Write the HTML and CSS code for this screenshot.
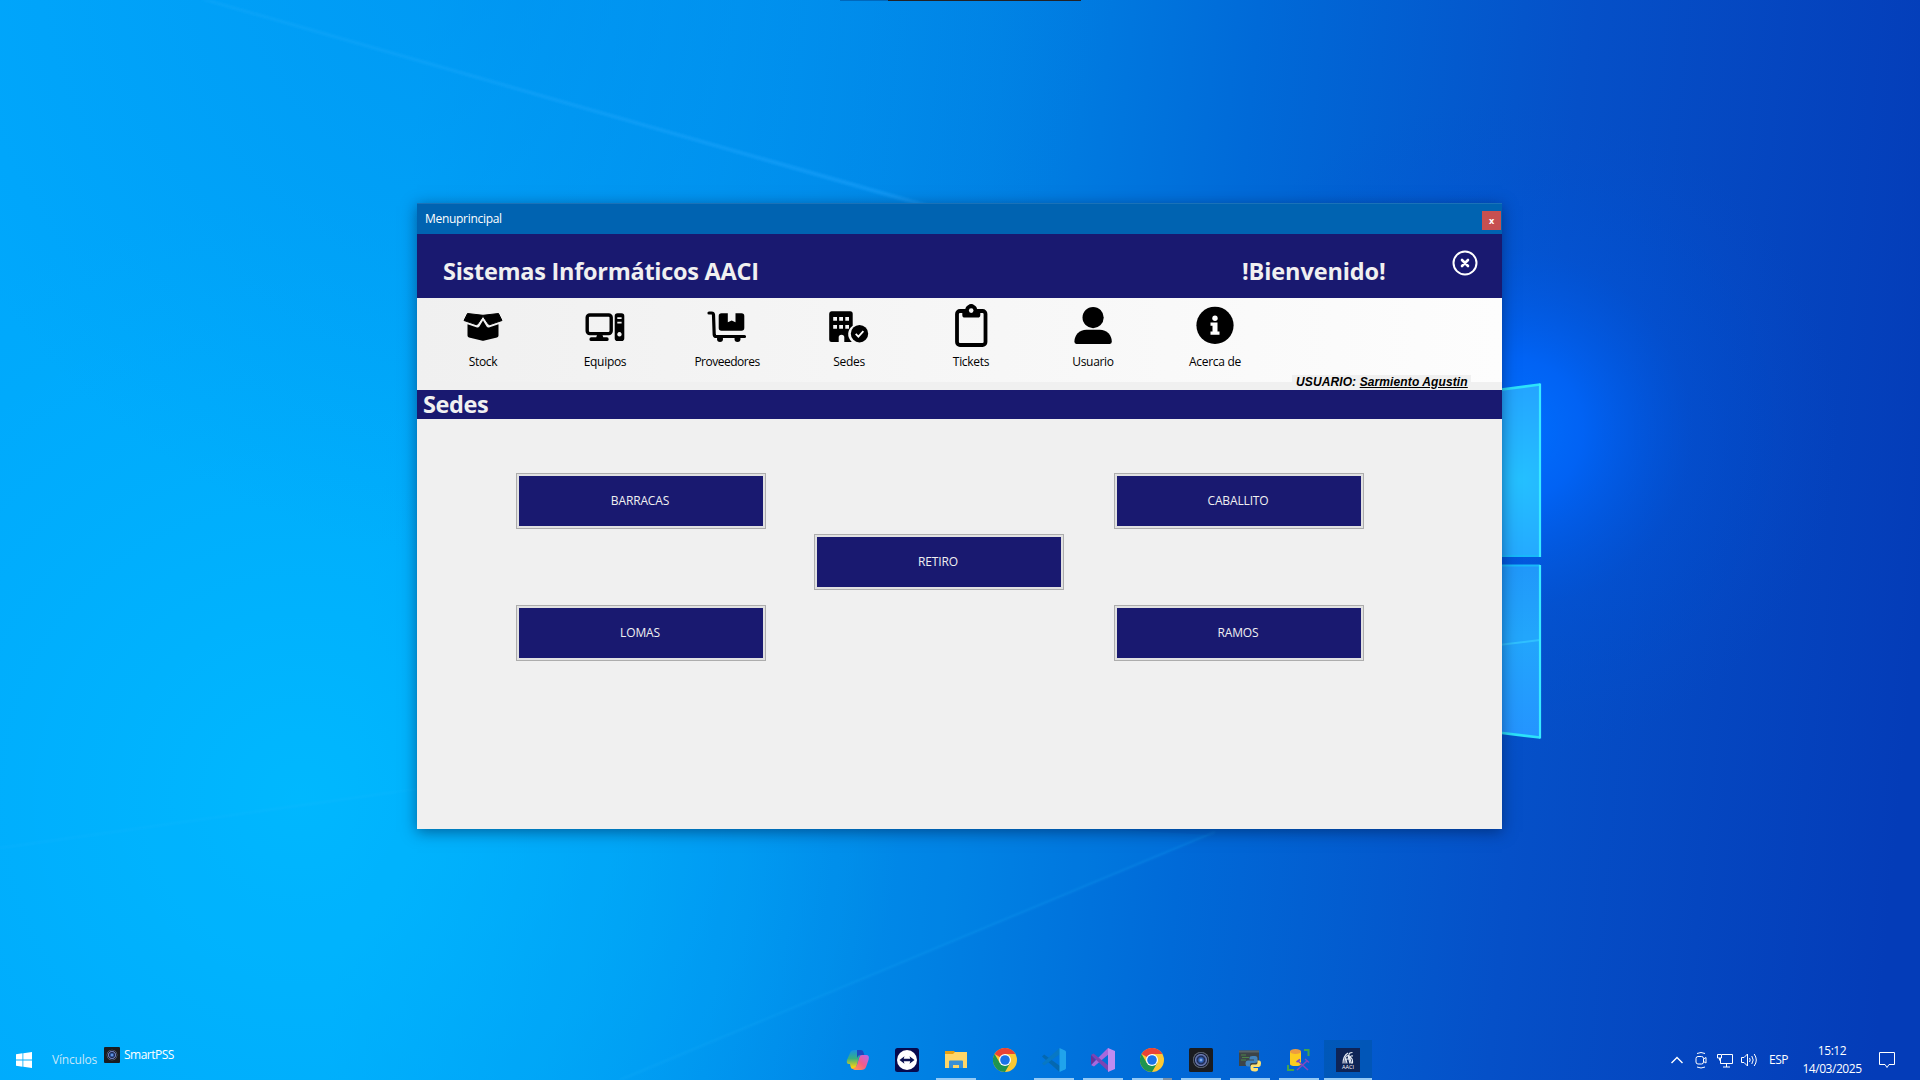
FILE: index.html
```
<!DOCTYPE html>
<html lang="es">
<head>
<meta charset="utf-8">
<title>Menuprincipal</title>
<link rel="stylesheet" href="styles.css">
</head>
<body>
<div class="desktop">
  <svg class="wallpaper" viewBox="0 0 1920 1080" aria-hidden="true">
    <defs>
      <linearGradient id="sky" gradientUnits="userSpaceOnUse" x1="0" y1="420" x2="1920" y2="600">
        <stop offset="0" stop-color="#00a8fc"/><stop offset=".2" stop-color="#00a8fa"/>
        <stop offset=".36" stop-color="#0096f0"/><stop offset=".5" stop-color="#0082e4"/>
        <stop offset=".63" stop-color="#006ad8"/><stop offset=".8" stop-color="#0550c8"/>
        <stop offset="1" stop-color="#043cb8"/>
      </linearGradient>
      <radialGradient id="cyan" gradientUnits="userSpaceOnUse" cx="300" cy="800" r="600">
        <stop offset="0" stop-color="#00baff" stop-opacity=".9"/><stop offset="1" stop-color="#00b4ff" stop-opacity="0"/>
      </radialGradient>
      <radialGradient id="shade" gradientUnits="userSpaceOnUse" cx="500" cy="-60" r="620">
        <stop offset="0" stop-color="#0088ec" stop-opacity=".5"/><stop offset="1" stop-color="#0088ec" stop-opacity="0"/>
      </radialGradient>
      <radialGradient id="glow" gradientUnits="userSpaceOnUse" cx="1510" cy="430" r="330">
        <stop offset="0" stop-color="#0070ff"/><stop offset=".22" stop-color="#0066fc" stop-opacity=".85"/>
        <stop offset=".55" stop-color="#0058e4" stop-opacity=".28"/><stop offset="1" stop-color="#0050d0" stop-opacity="0"/>
      </radialGradient>
      <linearGradient id="beam" x1="0" y1="0" x2="1" y2="0">
        <stop offset="0" stop-color="#2ab4ff" stop-opacity=".3"/><stop offset="1" stop-color="#22a4ff" stop-opacity=".8"/>
      </linearGradient>
      <radialGradient id="paneA" gradientUnits="userSpaceOnUse" cx="1520" cy="480" r="110">
        <stop offset="0" stop-color="#24c0ff"/><stop offset="1" stop-color="#24a0ff"/>
      </radialGradient>
      <linearGradient id="paneB" x1="0" y1="0" x2="0" y2="1">
        <stop offset="0" stop-color="#2098fa"/><stop offset=".42" stop-color="#22a6fc"/><stop offset="1" stop-color="#2494ff"/>
      </linearGradient>
      <filter id="soft" x="-20%" y="-20%" width="140%" height="140%"><feGaussianBlur stdDeviation="1.1"/></filter>
    </defs>
    <rect width="1920" height="1080" fill="url(#sky)"/>
    <rect width="1920" height="1080" fill="url(#cyan)"/>
    <rect width="1920" height="1080" fill="url(#shade)"/>
    <rect width="1920" height="1080" fill="url(#glow)"/>
    <path d="M0 848 417 790 1210 835 620 1080H0z" fill="#00b4ff" opacity=".08"/>
    <path d="M200 0H212L935 206H920z" fill="url(#beam)" opacity=".6" filter="url(#soft)"/>
    <path d="M0 848 417 789M1215 832 620 1080" stroke="#2cbcff" stroke-width="2" opacity=".16" fill="none" filter="url(#soft)"/>
    <path d="M1490 391.200 1540 384.500V556H1490z" fill="url(#paneA)"/>
    <path d="M1490 565.500H1540V737L1490 731z" fill="url(#paneB)"/>
    <path d="M1490 646 1540 640" stroke="#30c0ff" stroke-width="2"/>
    <path d="M1490 391 1540 384.500M1490 731.500 1540 737.500" stroke="#2ce2fa" stroke-width="2.600"/>
    <path d="M1490 556H1540M1490 565.500H1540" stroke="#18b8fa" stroke-width="2"/>
    <path d="M1540 383.500V557M1540 565V738.500" stroke="#38eaff" stroke-width="2.200"/>
    <path d="M840 .5H888" stroke="#0068bc"/><path d="M888 .5H1081" stroke="#222226"/>
  </svg>

  <main class="window">
    <div class="titlebar"><span class="caption">Menuprincipal</span><button class="close-red">x</button></div>
    <header class="header">
      <h1 class="brand">Sistemas Informáticos AACI</h1>
      <span class="welcome">!Bienvenido!</span>
      <svg class="exit" viewBox="0 0 26 26"><circle cx="13" cy="13" r="11.500"/><path d="m10 10 6 6m0-6-6 6" stroke-width="2.600"/></svg>
    </header>
    <nav class="toolbar">
      <a class="tool"><svg class="tool-icon" viewBox="0 0 40 44">
        <path d="M4.500 10.500 20 12.300 35.500 10.500 39 17.500 27 21.600Q26 22 25.300 21L20 13.200 14.700 21Q14 22 13 21.600L1 17.500z" stroke="#000" stroke-width="1" stroke-linejoin="round"/>
        <path d="M4.500 21.300 14 24.400Q15.500 24.800 16.400 23.400L20 17.400 23.600 23.400Q24.500 24.800 26 24.400L35.500 21.300V32.500Q35.500 34 34 34.500L21.500 37.600Q20 38 18.500 37.600L6 34.500Q4.500 34 4.500 32.500z"/></svg><span>Stock</span></a>
      <a class="tool"><svg class="tool-icon" viewBox="0 0 40 44">
        <rect x="2.200" y="12" width="24" height="18.600" rx="2.500" fill="none" stroke="#000" stroke-width="3.400"/>
        <path d="M12 32h5.500l1 3H11zM6.300 34.300h15.500a1.900 1.900 0 0 1 0 3.800H6.300a1.900 1.900 0 0 1 0-3.800z"/>
        <path fill-rule="evenodd" d="M32.500 10.300H36.500a2.800 2.800 0 0 1 2.800 2.800V35.300a2.800 2.800 0 0 1-2.800 2.800H32.500a2.800 2.800 0 0 1-2.800-2.800V13.100a2.800 2.800 0 0 1 2.800-2.800zM32.300 14.200v1.700h4.300v-1.700zM32.300 18.800v1.700h4.300v-1.700zM34.450 29.100a2.200 2.200 0 1 0 .01 0z"/></svg><span>Equipos</span></a>
      <a class="tool"><svg class="tool-icon" viewBox="0 0 40 44">
        <path d="M2 10H4.700Q6.300 10 6.500 11.700L7.200 31.500Q7.400 33.500 9.200 33.500H37.500" fill="none" stroke="#000" stroke-width="3.200" stroke-linecap="round"/>
        <path d="M14.500 10.300H20.800V19.300L24.700 17.400 28.500 19.300V10.300H34.500Q37.300 10.300 37.300 13V25Q37.300 27.800 34.500 27.800H14.500Q11.700 27.800 11.700 25V13Q11.700 10.300 14.500 10.300z"/>
        <circle cx="13" cy="36" r="3"/><circle cx="30.500" cy="36" r="3"/></svg><span class="long">Proveedores</span></a>
      <a class="tool"><svg class="tool-icon" viewBox="0 0 40 44">
        <path fill-rule="evenodd" d="M2.500 8.200H21.200Q23.700 8.200 23.700 10.700V22.700A10 10 0 0 0 22.500 38.500V39H15.300V34.300Q15.300 31.700 12.500 31.700T9.700 34.300V39H2.500Q.2 39 .2 36.700V10.700Q.2 8.200 2.500 8.200zM4.200 14V17.700H8V14zM10.200 14V17.700H14V14zM16.300 14V17.700H20V14zM4.200 22V25.700H8V22zM10.200 22V25.700H14V22zM16.300 22V25.700H20V22z"/>
        <circle cx="30.500" cy="30.700" r="8.700"/><path d="m26.700 30.900 2.700 2.700 5-5.400" fill="none" stroke="#fff" stroke-width="1.800"/></svg><span>Sedes</span></a>
      <a class="tool"><svg class="tool-icon" viewBox="0 0 40 44">
        <rect x="6" y="8" width="28.500" height="34" rx="3" fill="none" stroke="#000" stroke-width="3.800"/>
        <path fill-rule="evenodd" d="M11.300 6.200H14.200A6.200 6.200 0 0 1 26.200 6.200H29.300V12Q29.300 14.600 26.700 14.600H13.900Q11.300 14.600 11.300 12zM20.200 5.200a2.400 2.400 0 1 0 .01 0z"/><circle cx="20.200" cy="4" r="3"/><circle cx="20.200" cy="7.600" r="2.300" fill="#f7f7f7"/></svg><span>Tickets</span></a>
      <a class="tool"><svg class="tool-icon" viewBox="0 0 40 44">
        <circle cx="20.100" cy="14.600" r="10.600"/><path d="M13.500 26.800H26.700C34 26.800 38.800 32.300 38.800 38.800Q38.800 40.900 36.800 40.900H3.400Q1.400 40.900 1.400 38.800C1.400 32.300 6.200 26.800 13.500 26.800z"/></svg><span>Usuario</span></a>
      <a class="tool"><svg class="tool-icon" viewBox="0 0 40 44">
        <circle cx="20" cy="22.300" r="18.600"/><circle cx="20" cy="15.300" r="2.700" fill="#fff"/><path d="M15.500 19.500H22.500V28.500H24.500V31.700H15.500V28.500H17.500V22.700H15.500z" fill="#fff"/></svg><span>Acerca de</span></a>
    </nav>
    <div class="session">USUARIO: <u>Sarmiento Agustin</u></div>
    <h2 class="section-title">Sedes</h2>
    <section class="sites">
      <button class="site barracas">BARRACAS</button>
      <button class="site caballito">CABALLITO</button>
      <button class="site retiro">RETIRO</button>
      <button class="site lomas">LOMAS</button>
      <button class="site ramos">RAMOS</button>
    </section>
  </main>

  <footer class="taskbar">
    <div class="start-area">
      <svg class="start" viewBox="0 0 16 16"><path fill="#fff" d="M0 2.200 6.500 1.300V7.500H0zM7.300 1.200 16 0V7.500H7.300zM0 8.400H6.500V14.700L0 13.800zM7.300 8.400H16V16L7.300 14.800z"/></svg>
      <span class="links">Vínculos</span>
      <span class="smart"><svg class="mini" viewBox="0 0 24 24"><use href="#lens"/></svg><span class="smart-name">SmartPSS</span></span>
    </div>
    <div class="apps">
      <div class="app"><svg viewBox="0 0 24 24">
        <defs>
          <linearGradient id="cpA" x1="0" y1="0" x2="0" y2="1"><stop offset="0" stop-color="#1890e4"/><stop offset=".45" stop-color="#38b080"/><stop offset=".9" stop-color="#f8d010"/></linearGradient>
          <linearGradient id="cpB" x1="1" y1="0" x2="0" y2="1"><stop offset="0" stop-color="#b868f0"/><stop offset=".5" stop-color="#f45c88"/><stop offset="1" stop-color="#ffa048"/></linearGradient>
          <radialGradient id="lensG"><stop offset="0" stop-color="#c0d8f8"/><stop offset=".2" stop-color="#3a72cc"/><stop offset=".48" stop-color="#1c2850"/><stop offset=".68" stop-color="#7484c0"/><stop offset=".82" stop-color="#141c30"/><stop offset="1" stop-color="#7c8494"/></radialGradient>
          <g id="lens"><rect width="24" height="24" rx="1.500" fill="#1a1c20"/><circle cx="12" cy="12" r="8" fill="url(#lensG)"/></g>
          <g id="chrome"><circle cx="12" cy="12" r="12" fill="#fcc934"/><path d="M12 12 1.600 6A12 12 0 0 1 22.400 6H12z" fill="#ea4335"/><path d="M1.600 6A12 12 0 0 0 12 24L17.200 15 12 12 6.800 15z" fill="#1e9450"/><circle cx="12" cy="12" r="6" fill="#fff"/><circle cx="12" cy="12" r="4.800" fill="#1a73e8"/></g>
        </defs>
        <path d="M8.500 2H15Q17 2 17.500 4L18 6H14L10.500 18Q10 21 7 21 5 21 4.500 18.500L4 16H3Q0 16 1 12L4 5Q5 2 8.500 2z" fill="url(#cpA)"/><path d="M11 2H15Q17 2 17.500 4L18.300 7H14Q12 7 11 10z" fill="#1c48c0"/><path d="M16 7H20Q24 7 22.500 12L20 19Q19 22 15 22H9Q7 22 6.500 20H8Q10 20 11 17L13.500 9Q14 7 16 7z" fill="url(#cpB)"/></svg></div>
      <div class="app"><svg viewBox="0 0 24 24"><rect width="24" height="24" rx="2.500" fill="#060a4e"/><circle cx="12" cy="12" r="10" fill="#fff"/><path d="m4.500 12 5-3.800-.8 2.600h6.600l-.8-2.600 5 3.800-5 3.800.8-2.600H8.700l.8 2.600z" fill="#0a1050"/></svg></div>
      <div class="app open"><svg viewBox="0 0 24 24"><path d="M1 3H10L12 5V8H1z" fill="#e8a010"/><path d="M1 6H9L11 4H23V20H1z" fill="#ffd668"/><path d="M5 20V13.500Q5 12.500 6 12.500H18Q19 12.500 19 13.500V20H15V17H9V20z" fill="#3890d8"/></svg></div>
      <div class="app"><svg viewBox="0 0 24 24"><use href="#chrome"/></svg></div>
      <div class="app open"><svg viewBox="0 0 24 24"><path d="M17.500 24 0 8.500 2.200 6.500 18 18z" fill="#0468b0"/><path d="M17.500 0 0 15.500 2.200 17.500 18 6z" fill="#0878c4"/><path d="M17.500 0 23 2.500Q24 3 24 4V20Q24 21 23 21.500L17.500 24z" fill="#20a4ec"/></svg></div>
      <div class="app open"><svg viewBox="0 0 24 24"><path d="M0 17 17 0 18 6 3 18.500z" fill="#a868dc"/><path d="M0 7 2.500 5.500 18 18V24z" fill="#7c44b4"/><path d="M0 7V17L4.500 12z" fill="#6c3098"/><path d="M17 0 24 3V21L17 24z" fill="#c08cf0"/></svg></div>
      <div class="app open multi"><svg viewBox="0 0 24 24"><use href="#chrome"/></svg></div>
      <div class="app open"><svg viewBox="0 0 24 24"><use href="#lens"/></svg></div>
      <div class="app open"><svg viewBox="0 0 24 24"><path d="M1 2.500H21V18H1z" fill="#3c4448"/><path d="M1 2.500H21V4.500H1z" fill="#586468"/><path d="M3 7h5M4 9.500h7M3 12h5" stroke="#4c8448" stroke-width="1.200"/><path d="M14.500 8H17Q19.500 8 19.500 10.500V13Q19.500 15 17 15H13.500Q12 15 12 17V18.500H10Q7.500 18.500 7.500 15.500T10 12.500H16V11.500H11.500V10Q11.500 8 14.500 8z" fill="#4484bc"/><path d="M19.500 12.500H21Q23 12.500 23 15.500T21 19H15.500V20H20V21.500Q20 23.500 16.500 23.500T12.500 21V18.500Q12.500 16.500 14.500 16.500H18Q19.500 16.500 19.500 14.500z" fill="#ffe070"/></svg></div>
      <div class="app open"><svg viewBox="0 0 24 24"><path d="M3 3V16Q3 18 8.500 18T14 16V3z" fill="#fccc20"/><ellipse cx="8.500" cy="3.500" rx="5.500" ry="2.500" fill="#ec9c40"/><path d="M17 2H21.500V8M1 17V22H7" fill="none" stroke="#40a450" stroke-width="2"/><path d="m10 22 10-9M11 13l10 9M9.500 14 13 11.500M18 11l4 3.500" stroke="#8048c0" stroke-width="1.600"/></svg></div>
      <div class="app open active"><svg viewBox="0 0 24 24"><rect width="24" height="24" fill="#0e2456"/><path d="M7 15.500Q7 8 12 5M9 15.500Q8.500 8 12 7.500L14 15.500M11 15.500 10 11h3M16.500 4.500Q12.500 4.500 13 7.500L15.500 15.500M17 8Q14 7.500 14.500 9.500 17 10.500 16.500 15.500" fill="none" stroke="#e8edf6" stroke-width="1.100"/><text x="12" y="20.500" text-anchor="middle" class="aaci">AACI</text></svg></div>
    </div>
    <div class="tray">
      <svg class="tray-icon" viewBox="0 0 18 18"><path d="m3.500 12 5.500-5.500 5.500 5.500" stroke-width="1.400"/></svg>
      <svg class="tray-icon" viewBox="0 0 18 18"><rect x="4" y="5.500" width="7.500" height="7.500" rx="2"/><path d="m11.500 8 2.500-1.500v5.500l-2.500-1.500M5 2.500q4-2 8 0M5 16q4 2 8 0"/></svg>
      <svg class="tray-icon" viewBox="0 0 18 18"><path d="M6 3.500H16.500V12.500H4.500V7M10.500 12.500V16M7 16h7M1.500 3.500h4V7h-4zM3.500 7V9.500"/></svg>
      <svg class="tray-icon" viewBox="0 0 18 18"><path d="M1.500 6.500H4L7.500 3V15L4 11.500H1.500zM9.500 7q1.400 2 0 4M11.800 5q2.800 4 0 8M14.200 3q4.200 6 0 12"/></svg>
      <span class="lang">ESP</span>
      <span class="clock"><span>15:12</span><span class="date">14/03/2025</span></span>
      <svg class="tray-icon notice" viewBox="0 0 18 18"><path d="M1.500 1.500H16.500V13.500H11L9 16.500 7 13.500H1.500z"/></svg>
    </div>
  </footer>
</div>
</body>
</html>
```
FILE: styles.css
```
* { box-sizing: border-box; }
body { margin: 0; font-family: "Open Sans", "Noto Sans", sans-serif; font-size: 12px; }
button { font: inherit; padding: 0; border: 0; }
h1, h2 { margin: 0; }

.desktop { position: relative; width: 1920px; height: 1080px; overflow: hidden; display: flex; flex-direction: column; justify-content: flex-end; }
.wallpaper { position: absolute; inset: 0; width: 1920px; height: 1080px; }

.window { position: absolute; left: 417px; top: 203px; width: 1085px; height: 626px; display: flex; flex-direction: column; background: #f0f0f0; box-shadow: 0 3px 14px rgba(0, 20, 60, .5); }
.titlebar { height: 31px; flex: none; display: flex; justify-content: space-between; padding: 0 1px 0 8px; background: #0063b1; border-top: 1px solid #1a72b8; color: #fff; }
.caption { line-height: 30px; letter-spacing: -.3px; }
.close-red { width: 19px; height: 19px; margin-top: 7px; background: #c75050; color: #fff; font: bold 9px/18px "Open Sans", sans-serif; }
.header { height: 64px; flex: none; display: flex; background: #191970; color: #f0f0f0; padding-left: 26px; }
.brand, .welcome, .section-title { font-size: 23.500px; font-weight: 700; white-space: nowrap; }
.brand { width: 799px; line-height: 75px; letter-spacing: -.27px; }
.welcome { width: 210px; line-height: 75px; letter-spacing: -.12px; }
.exit { width: 26px; height: 26px; margin-top: 16px; fill: none; stroke: #fff; stroke-width: 2; stroke-linecap: round; }

.toolbar { height: 84px; flex: none; display: flex; padding-left: 5px; background: linear-gradient(90deg, #f0f0f0, #fdfdfd); color: #000; }
.tool { width: 122px; display: flex; flex-direction: column; align-items: center; padding-top: 5px; line-height: 16px; letter-spacing: -.3px; }
.tool-icon { width: 40px; height: 44px; margin-bottom: 7px; }
.long { letter-spacing: -.5px; }
.session { position: absolute; left: 875px; top: 172px; width: 179px; height: 15px; padding-left: 4px; overflow: hidden; background: #f0f0f0; color: #000; font: italic bold 12px/14px "Liberation Sans", Arial, sans-serif; letter-spacing: .11px; white-space: nowrap; }
.section-title { height: 29px; flex: none; margin-top: 8px; padding-left: 6px; line-height: 29px; background: #191970; color: #f0f0f0; letter-spacing: -.4px; }

.sites { display: grid; grid-template-columns: 250px 250px 250px; grid-template-rows: 56px 56px 56px; column-gap: 49px; padding: 54px 0 0 99px; }
.site { border: 1px solid #adadad; box-shadow: inset 0 0 0 2px #e1e1e1; background: #191970; color: #f0f0f0; letter-spacing: -.15px; padding: 0 2px 2px 0; }
.barracas { grid-area: 1 / 1; }
.caballito { grid-area: 1 / 3; }
.retiro { grid-area: 2 / 2; margin: 5px 1px -5px -1px; }
.lomas { grid-area: 3 / 1; margin: 20px 0 -20px; }
.ramos { grid-area: 3 / 3; margin: 20px 0 -20px; }

.taskbar { position: relative; height: 40px; display: flex; color: #fff; }
.start-area { width: 834px; display: flex; padding-left: 16px; }
.start { width: 16px; height: 16px; margin-top: 12px; }
.links { margin-left: 20px; width: 52px; line-height: 40px; color: #c4e6fa; letter-spacing: -.2px; }
.smart { display: flex; gap: 4px; height: 30px; align-items: center; letter-spacing: -.5px; }
.smart-name { padding-bottom: 2px; }
.mini { width: 16px; height: 16px; }
.apps { width: 816px; display: flex; gap: 1px; }
.app { position: relative; width: 48px; height: 40px; display: flex; align-items: center; justify-content: center; }
.app svg { width: 24px; height: 24px; }
.app.open::after { content: ""; position: absolute; left: 4px; right: 4px; bottom: 0; height: 2px; background: #95caf5; }
.app.multi::after { background: linear-gradient(90deg, #95caf5 31px, #7790a8 31px); }
.app.active { background: rgba(0, 84, 166, .55); }
.app.active::after { left: 0; right: 0; }
.aaci { font: 5.500px "Open Sans", sans-serif; fill: #fff; }
.tray { display: flex; align-items: center; padding-left: 18px; }
.tray-icon { width: 18px; height: 18px; margin-right: 6px; fill: none; stroke: #fff; stroke-width: 1; }
.lang { width: 34px; margin-left: 5px; padding-bottom: 1px; letter-spacing: -.5px; }
.clock { width: 58px; display: flex; flex-direction: column; align-items: center; line-height: 18px; letter-spacing: -.45px; }
.notice { margin: 0 0 0 17px; }
```
